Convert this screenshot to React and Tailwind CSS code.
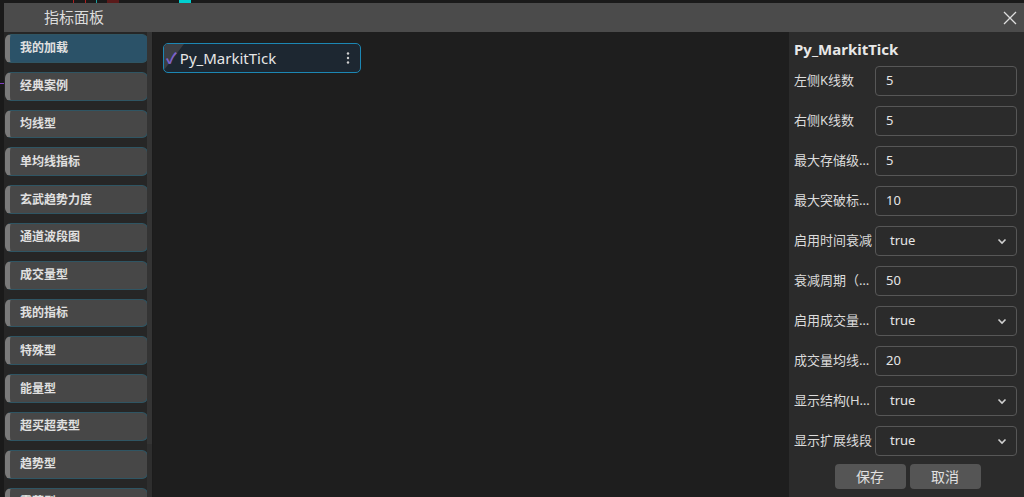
import { useState } from "react";

const categories = [
  "我的加载",
  "经典案例",
  "均线型",
  "单均线指标",
  "玄武趋势力度",
  "通道波段图",
  "成交量型",
  "我的指标",
  "特殊型",
  "能量型",
  "超买超卖型",
  "趋势型",
  "震荡型",
];

const params = [
  { label: "左侧K线数", value: "5" },
  { label: "右侧K线数", value: "5" },
  { label: "最大存储级别数", value: "5" },
  { label: "最大突破标记数", value: "10" },
  { label: "启用时间衰减", value: "true", select: true },
  { label: "衰减周期（K线）", value: "50" },
  { label: "启用成交量过滤", value: "true", select: true },
  { label: "成交量均线周期", value: "20" },
  { label: "显示结构(HH/HL)", value: "true", select: true },
  { label: "显示扩展线段", value: "true", select: true },
];

const font = { fontFamily: '"Noto Sans", "Noto Sans CJK SC", sans-serif' };

function Chevron() {
  return (
    <svg width="12" height="12" viewBox="0 0 12 12" fill="none" stroke="#d0d0d0" strokeWidth="1.6">
      <path d="M2.5 4.5 L6 8 L9.5 4.5" />
    </svg>
  );
}

export default function App() {
  const [active, setActive] = useState(0);

  return (
    <div className="w-[1024px] h-[497px] overflow-hidden bg-[#1a1a1a] flex flex-col" style={font}>
      {/* chart peeking behind the dialog */}
      <div className="h-[3px] flex shrink-0">
        <div className="w-[73px]" />
        <div className="w-[1px] bg-[#b02020]" />
        <div className="w-[11px]" />
        <div className="w-[1px] bg-[#b02020]" />
        <div className="w-[10px]" />
        <div className="w-[1px] bg-[#1aa0a0]" />
        <div className="w-[10px]" />
        <div className="w-[12px] bg-[#5a1a1a]" />
        <div className="w-[60px]" />
        <div className="w-[12px] bg-[#00d0d0]" />
      </div>

      <div className="flex-1 flex min-h-0">
        <div className="w-[4px] shrink-0 flex flex-col">
          <div className="h-[80px]" />
          <div className="h-[1px] bg-[#8040c0]" />
        </div>

        <div className="flex-1 flex flex-col min-h-0">
          {/* header */}
          <div className="h-[29px] shrink-0 bg-[#4b4b4b] flex items-center justify-between pl-[40px] pr-[6px]">
            <span className="text-[15px] text-[#dcdcdc]">指标面板</span>
            <svg width="16" height="16" viewBox="0 0 16 16" stroke="#dedede" strokeWidth="1.3">
              <path d="M2 2 L14 14 M14 2 L2 14" />
            </svg>
          </div>

          <div className="flex-1 flex min-h-0">
            {/* sidebar */}
            <div className="w-[149px] shrink-0 bg-[#262626] flex min-h-0 border-r border-r-[#1c1c1c]">
              <div className="flex-1 flex flex-col gap-[9px] pt-[2px] pl-[1px] overflow-hidden">
                {categories.map((c, i) => (
                  <button
                    key={c}
                    onClick={() => setActive(i)}
                    className={`h-[28.8px] shrink-0 w-[143px] flex items-center rounded-md border border-[#2f5563] border-l-[5px] border-l-[#7a7a7a] pl-[10px] text-left text-[12px] font-bold text-[#e0e0e0] ${
                      active === i ? "bg-[#2b5268]" : "bg-[#474747]"
                    }`}
                  >
                    {c}
                  </button>
                ))}
              </div>
              <div className="w-[5px] bg-[#2e2e2e] flex flex-col">
                <div className="h-[412px] bg-[#343434]" />
              </div>
            </div>

            {/* loaded indicators */}
            <div className="flex-1 bg-[#1e1e1e] pt-[11px] pl-[10px]">
              <div className="w-[198px] h-[30px] rounded-[5px] border border-[#1c87b4] bg-[#1d2731] flex items-center relative overflow-hidden">
                <div className="absolute left-0 top-0 w-0 h-0 border-t-[26px] border-t-[#3c3f44] border-r-[20px] border-r-transparent" />
                <span className="relative text-[#7d62cc] text-[15px] font-bold ml-[2px] leading-none">✓</span>
                <span className="relative text-[15px] text-[#e6e6e6] ml-[3px] flex-1">Py_MarkitTick</span>
                <svg width="4" height="14" viewBox="0 0 4 14" fill="#cfcfcf" className="mr-[10px]">
                  <circle cx="2" cy="2.5" r="1.2" />
                  <circle cx="2" cy="7" r="1.2" />
                  <circle cx="2" cy="11.5" r="1.2" />
                </svg>
              </div>
            </div>

            {/* params panel */}
            <div className="w-[235px] shrink-0 bg-[#2b2b2b] pl-[5px] pr-[7px] flex flex-col">
              <div className="h-[34px] flex items-center text-[15px] font-bold text-[#e8e8e8]">Py_MarkitTick</div>
              <div className="flex flex-col gap-[10px]">
                {params.map((p) => (
                  <div key={p.label} className="flex items-center h-[30px]">
                    <div className="w-[81px] pr-[2px] text-[13px] text-[#dcdcdc] truncate">{p.label}</div>
                    <div className="flex-1 h-[30px] rounded-[4px] border border-[#575757] bg-[#2b2b2b] flex items-center justify-between pl-[10px] pr-[8px] text-[13px] text-[#e6e6e6]">
                      <span className={p.select ? "pl-[4px]" : ""}>{p.value}</span>
                      {p.select && <Chevron />}
                    </div>
                  </div>
                ))}
              </div>
              <div className="flex justify-center gap-[4px] mt-[8px] pl-[4px]">
                <button className="w-[71px] h-[25px] rounded-[4px] bg-[#555555] text-[14px] text-[#e0e0e0]">保存</button>
                <button className="w-[71px] h-[25px] rounded-[4px] bg-[#555555] text-[14px] text-[#e0e0e0]">取消</button>
              </div>
            </div>
          </div>
        </div>
      </div>
    </div>
  );
}
